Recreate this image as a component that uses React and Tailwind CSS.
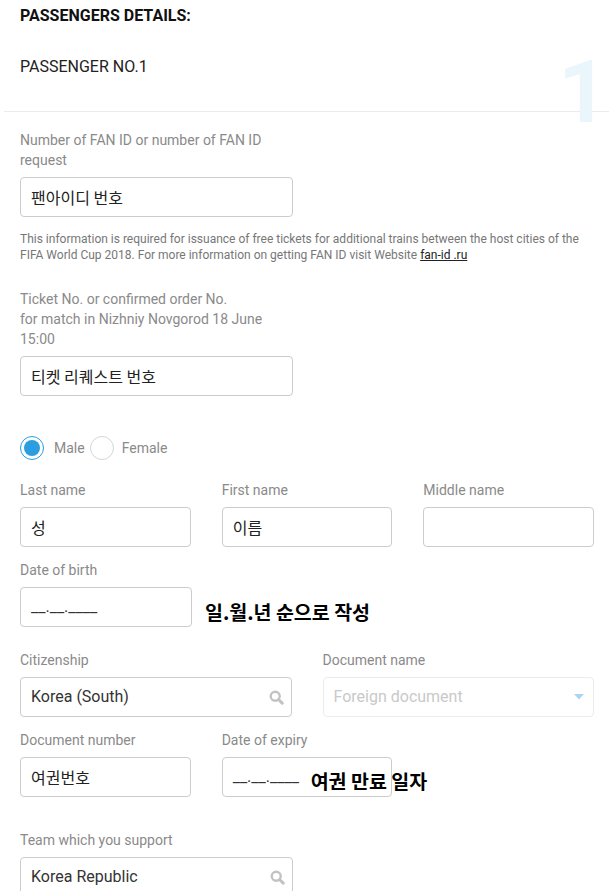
const labelCls = "block text-[14px] leading-5 text-[#8a8a8a] mb-[7px]";
const inputCls =
  "flex h-10 items-center rounded-[4px] border bg-white px-[10px] text-[16px]";
const krCls = "font-['Noto_Sans_CJK_KR',sans-serif] text-[#222]";
const noteCls = "font-['Noto_Sans_CJK_KR',sans-serif] text-[19.5px] font-bold leading-6 text-black whitespace-nowrap";

function SearchIcon() {
  return (
    <svg width="15" height="15" viewBox="0 0 14 14" className="ml-auto mr-[-3px] shrink-0">
      <circle cx="5.8" cy="5.8" r="4.2" fill="none" stroke="#c2c2c2" strokeWidth="2.2" />
      <line x1="8.9" y1="8.9" x2="12.3" y2="12.3" stroke="#c2c2c2" strokeWidth="2.8" strokeLinecap="round" />
    </svg>
  );
}

function Input({ children, className = "border-[#cccccc] text-[#333]" }) {
  return <div className={`${inputCls} w-full ${className}`}>{children}</div>;
}

function Field({ label, children }) {
  return (
    <div>
      <label className={labelCls}>{label}</label>
      {children}
    </div>
  );
}

export default function App() {
  return (
    <div className="relative min-h-[891px] overflow-hidden bg-white font-['Roboto','Noto_Sans_CJK_KR',sans-serif] text-[#222]">
      <h2 className="px-5 pt-1 text-[16px] font-bold uppercase leading-6 text-[#111]">Passengers details:</h2>

      {/* 승객 헤더 + 큰 번호 */}
      <div className="relative ml-1 border-b border-[#ebebeb] pb-8 pl-4 pt-[27px]">
        <p className="text-[16px] leading-6 text-[#222]">PASSENGER NO.1</p>
        <span className="absolute right-[1px] top-[21px] text-[87px] font-bold leading-none text-[#eaf5fc]">1</span>
      </div>

      <div className="pl-5 pr-[15px]">
        <div className="w-[273px] pt-[18px]">
          <label className={labelCls}>
            Number of FAN ID or number of FAN ID
            <br />
            request
          </label>
          <Input>
            <span className={krCls}>팬아이디 번호</span>
          </Input>
        </div>

        <p className="mt-[14px] text-[12px] leading-4 text-[#777]">
          This information is required for issuance of free tickets for additional trains between the host cities of the
          <br />
          FIFA World Cup 2018. For more information on getting FAN ID visit Website{" "}
          <a className="text-[#222] underline">fan-id .ru</a>
        </p>

        <div className="mt-[26px] w-[273px]">
          <label className={labelCls}>
            Ticket No. or confirmed order No.
            <br />
            for match in Nizhniy Novgorod 18 June
            <br />
            15:00
          </label>
          <Input>
            <span className={krCls}>티켓 리퀘스트 번호</span>
          </Input>
        </div>

        {/* 성별 */}
        <div className="mt-10 flex items-center text-[14px] text-[#8a8a8a]">
          <span className="flex h-6 w-6 items-center justify-center rounded-full border-[1.5px] border-[#2b9de0]">
            <span className="h-4 w-4 rounded-full bg-[#2b9de0]" />
          </span>
          <span className="ml-2.5">Male</span>
          <span className="ml-[5px] h-6 w-6 rounded-full border border-[#d6d6d6]" />
          <span className="ml-2">Female</span>
        </div>

        <div className="mt-5 grid grid-cols-3 gap-x-[31px]">
          <Field label="Last name">
            <Input>
              <span className={krCls}>성</span>
            </Input>
          </Field>
          <Field label="First name">
            <Input>
              <span className={krCls}>이름</span>
            </Input>
          </Field>
          <Field label="Middle name">
            <Input />
          </Field>
        </div>

        <div className="mt-[13px]">
          <label className={labelCls}>Date of birth</label>
          <div className="flex items-center">
            <div className="w-[172px] shrink-0">
              <Input>
                <span>__.__.____</span>
              </Input>
            </div>
            <span className={`${noteCls} ml-[13px] mt-[9px]`}>일.월.년 순으로 작성</span>
          </div>
        </div>

        <div className="mt-[23px] grid grid-cols-2 gap-x-[31px]">
          <Field label="Citizenship">
            <Input>
              <span>Korea (South)</span>
              <SearchIcon />
            </Input>
          </Field>
          <Field label="Document name">
            <Input className="border-[#ececec] text-[#c9c9c9]">
              <span>Foreign document</span>
              <svg width="10" height="6" viewBox="0 0 10 6" className="ml-auto mr-[-1px]">
                <path d="M0 0 L10 0 L5 5.5 Z" fill="#a9d5f2" />
              </svg>
            </Input>
          </Field>
        </div>

        <div className="mt-[13px] grid grid-cols-3 gap-x-[31px]">
          <Field label="Document number">
            <Input>
              <span className={krCls}>여권번호</span>
            </Input>
          </Field>
          <Field label="Date of expiry">
            <div className="relative">
              <Input>
                <span>__.__.____</span>
              </Input>
              <span className={`${noteCls} absolute left-[89px] top-[12px]`}>여권 만료 일자</span>
            </div>
          </Field>
        </div>

        <div className="mt-[33px] w-[273px]">
          <label className={labelCls}>Team which you support</label>
          <Input>
            <span>Korea Republic</span>
            <SearchIcon />
          </Input>
        </div>
      </div>
    </div>
  );
}
